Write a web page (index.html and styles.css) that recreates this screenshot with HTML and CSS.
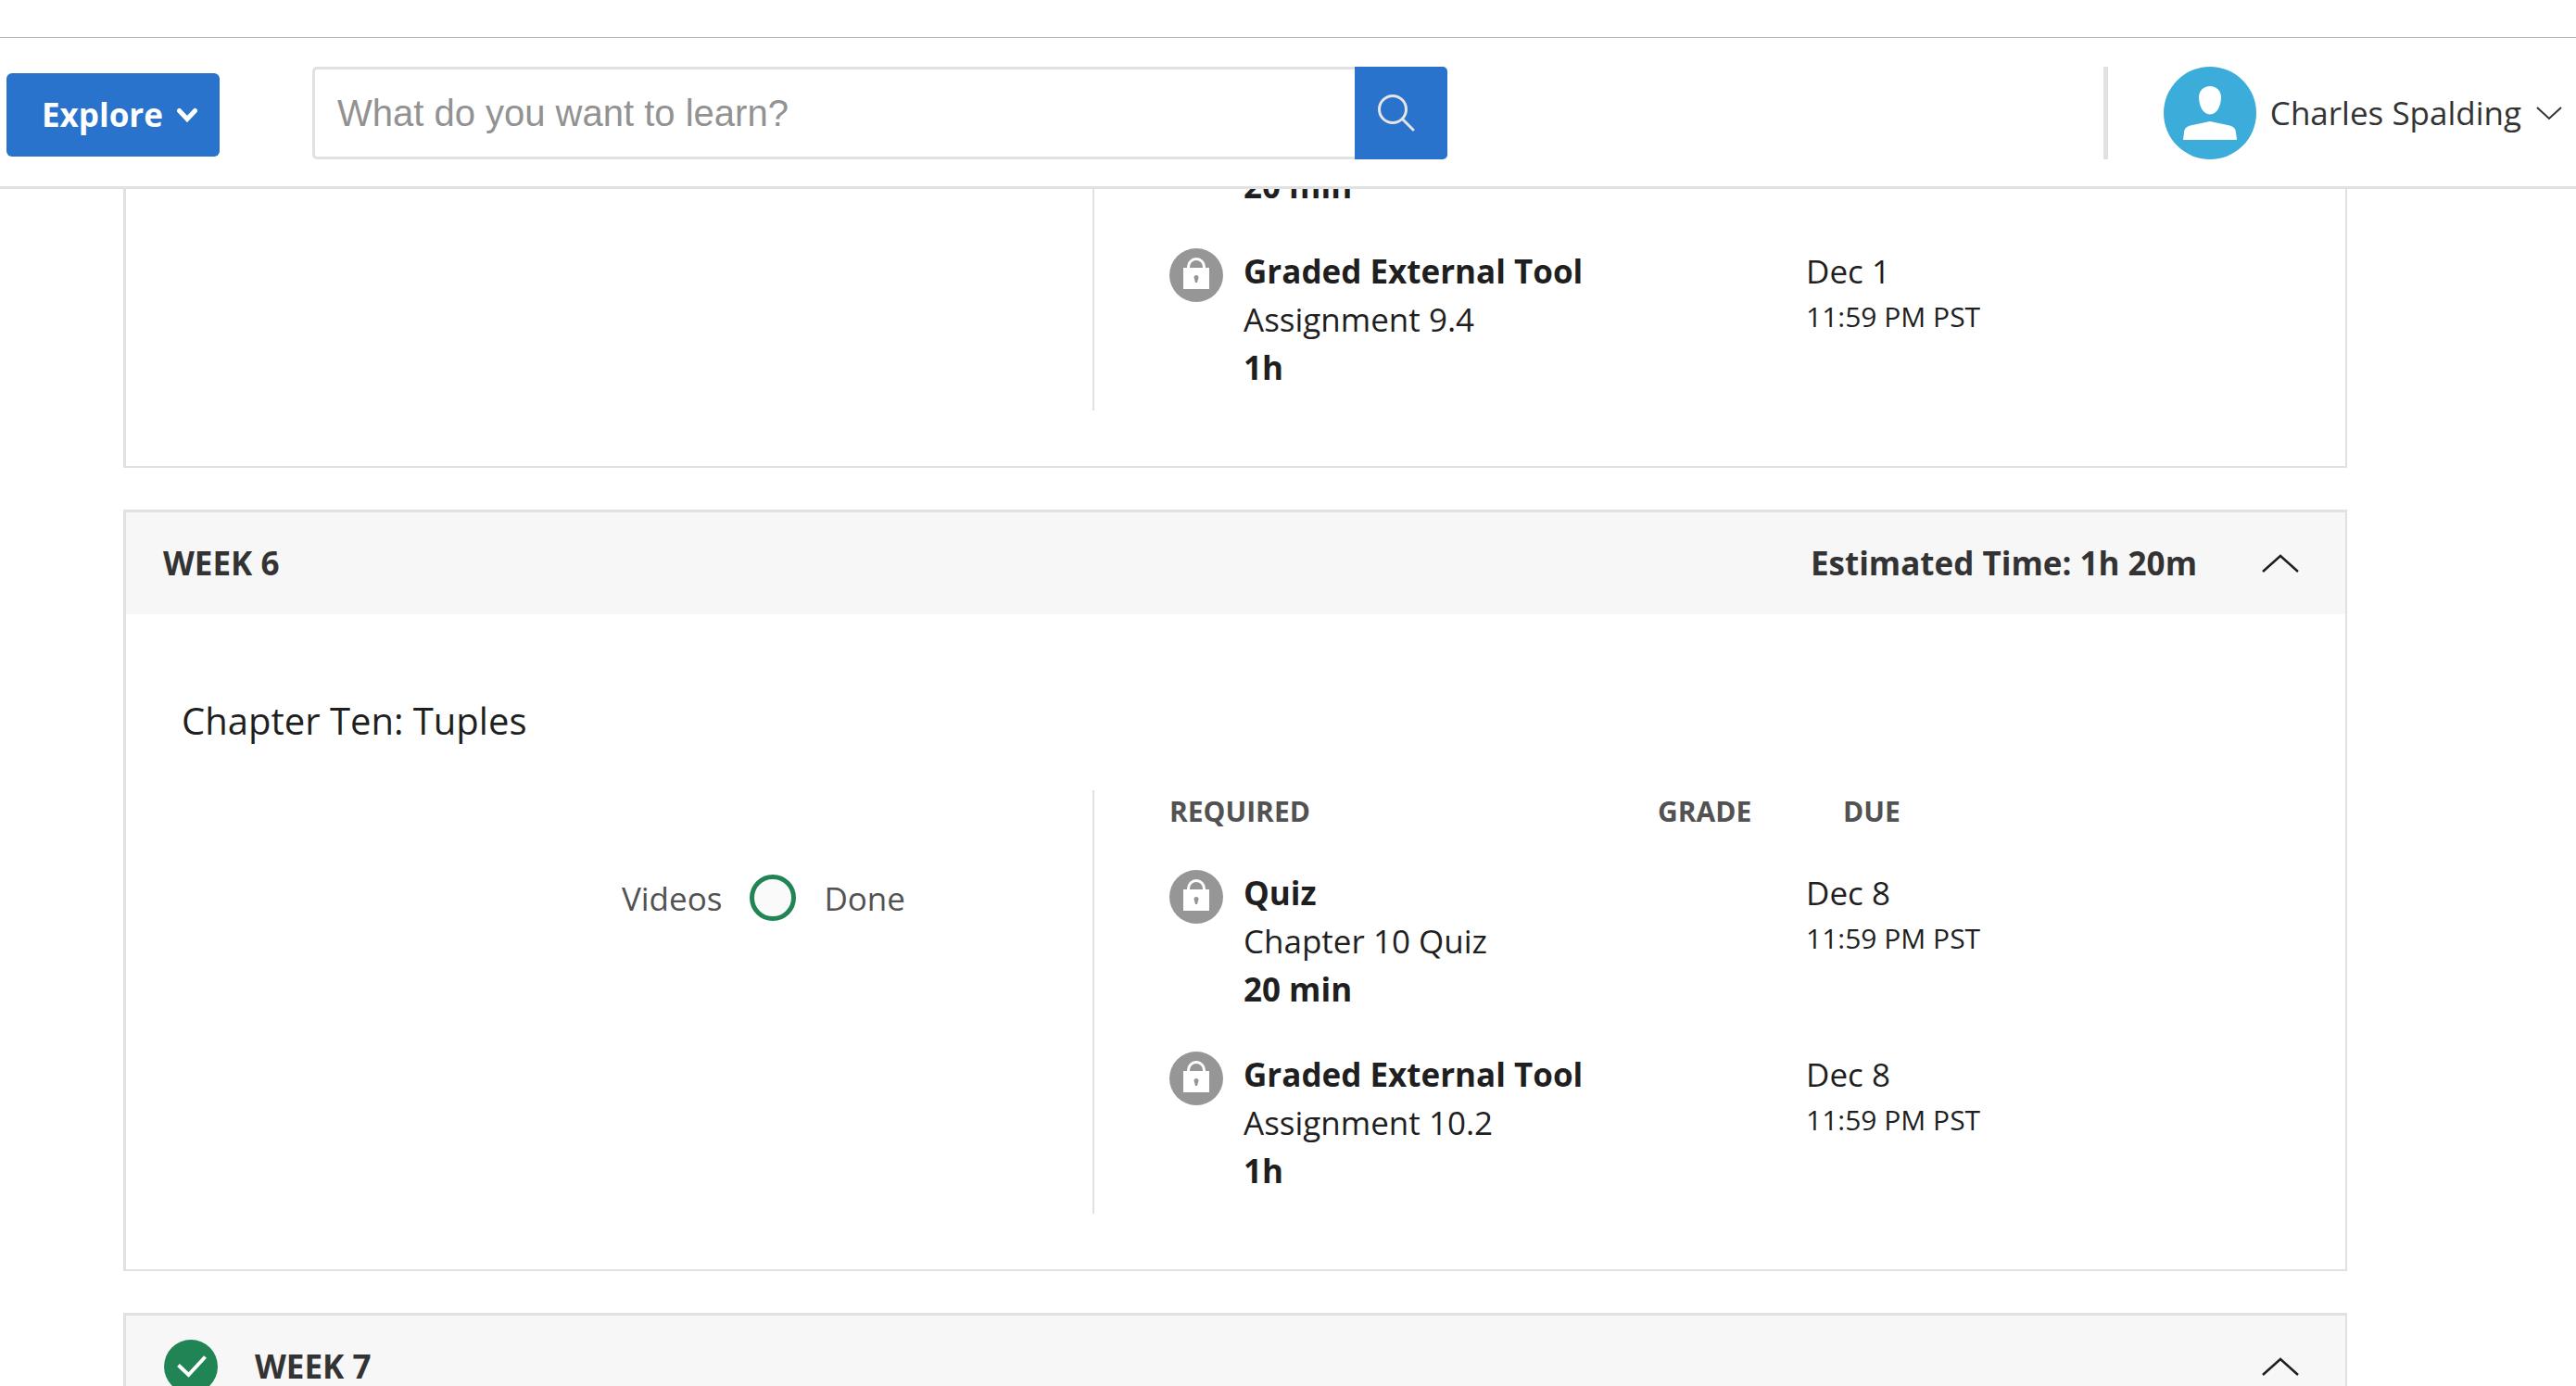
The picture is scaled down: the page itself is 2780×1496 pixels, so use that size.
FILE: index.html
```html
<!DOCTYPE html>
<html lang="en">
<head>
<meta charset="utf-8">
<title>Course Home</title>
<link rel="stylesheet" href="styles.css">
</head>
<body>
<svg class="sprite" aria-hidden="true">
  <symbol id="lock" viewBox="0 0 58 58">
    <circle cx="29" cy="29" r="29" fill="#969696"/>
    <path d="M20.500 22V20a8.500 8.500 0 0 1 17 0V22" fill="none" stroke="#fff" stroke-width="3"/>
    <path d="M15 21H43V44H15Z" fill="#fff"/>
    <path d="M29 29a2.500 2.500 0 0 0-2.500 2.500L28 37H30L31.500 31.500A2.500 2.500 0 0 0 29 29Z" fill="#969696"/>
  </symbol>
  <symbol id="chevron-up" viewBox="0 0 40 20">
    <path d="M1 19L20 2L39 19" fill="none" stroke="#1f1f1f" stroke-width="2.500"/>
  </symbol>
</svg>
<header class="site-header">
  <button class="explore" type="button">Explore
    <svg width="22" height="16" viewBox="0 0 22 16"><path d="M2.500 3.500L11 12.500L19.500 3.500" fill="none" stroke="#fff" stroke-width="5" stroke-linecap="round"/></svg>
  </button>
  <form class="search" role="search">
    <input class="search-input" type="text" placeholder="What do you want to learn?" aria-label="Search">
    <button class="search-button" type="button" aria-label="Search">
      <svg width="42" height="42" viewBox="0 0 42 42"><g fill="none" stroke="#e5e5e5" stroke-width="3" stroke-linecap="round"><circle cx="17" cy="17" r="14.500"/><path d="M27.500 27.500L39 39"/></g></svg>
    </button>
  </form>
  <button class="account" type="button">
    <svg class="avatar" width="100" height="100" viewBox="0 0 100 100">
      <circle cx="50" cy="50" r="50" fill="#3cadda"/>
      <path d="M50 21C43 21 38 26 38 33C38.500 43 42 51 50 51.500C58 51 61.500 43 62 33C62 26 57 21 50 21Z" fill="#fff"/>
      <path d="M50 59L69 63C76 64.500 77.500 66.500 78 71L79 79H21L22 71C22.500 66.500 24 64.500 31 63Z" fill="#fff"/>
    </svg>
    <span class="account-name">Charles Spalding</span>
    <svg width="28" height="15" viewBox="0 0 28 15"><path d="M1 1L14 13L27 1" fill="none" stroke="#333" stroke-width="2"/></svg>
  </button>
</header>

<main class="weeks">
  <section class="week week-scrolled">
    <div class="columns">
      <div class="progress"></div>
      <div class="required">
        <table class="items">
          <colgroup><col class="col-item"><col class="col-grade"><col></colgroup>
          <tbody>
            <tr>
              <td><div class="item item-plain"><strong>20 min</strong></div></td><td></td><td></td>
            </tr>
            <tr>
              <td><div class="item"><svg class="lock"><use href="#lock"/></svg><div><strong>Graded External Tool</strong><span>Assignment 9.4</span><strong>1h</strong></div></div></td>
              <td></td>
              <td>Dec 1<small>11:59 PM PST</small></td>
            </tr>
          </tbody>
        </table>
      </div>
    </div>
  </section>

  <section class="week">
    <header class="week-header">
      <h2>WEEK 6</h2>
      <p class="estimate">Estimated Time: 1h 20m</p>
      <button class="toggle" type="button" aria-label="Collapse week 6"><svg width="40" height="20"><use href="#chevron-up"/></svg></button>
    </header>
    <h3 class="chapter">Chapter Ten: Tuples</h3>
    <div class="columns">
      <div class="progress"><span>Videos</span><span class="ring"></span><span>Done</span></div>
      <div class="required">
        <table class="items">
          <colgroup><col class="col-item"><col class="col-grade"><col></colgroup>
          <thead><tr><th scope="col">REQUIRED</th><th scope="col">GRADE</th><th scope="col" class="due-head">DUE</th></tr></thead>
          <tbody>
            <tr>
              <td><div class="item"><svg class="lock"><use href="#lock"/></svg><div><strong>Quiz</strong><span>Chapter 10 Quiz</span><strong>20 min</strong></div></div></td>
              <td></td>
              <td>Dec 8<small>11:59 PM PST</small></td>
            </tr>
            <tr>
              <td><div class="item"><svg class="lock"><use href="#lock"/></svg><div><strong>Graded External Tool</strong><span>Assignment 10.2</span><strong>1h</strong></div></div></td>
              <td></td>
              <td>Dec 8<small>11:59 PM PST</small></td>
            </tr>
          </tbody>
        </table>
      </div>
    </div>
  </section>

  <section class="week">
    <header class="week-header">
      <svg class="done" width="58" height="58" viewBox="0 0 58 58"><circle cx="29" cy="29" r="29" fill="#208454"/><path d="M15.500 27.500L26.500 38L44.500 18.500" fill="none" stroke="#fff" stroke-width="4"/></svg>
      <h2>WEEK 7</h2>
      <button class="toggle" type="button" aria-label="Collapse week 7"><svg width="40" height="20"><use href="#chevron-up"/></svg></button>
    </header>
  </section>
</main>
</body>
</html>
```
FILE: styles.css
```css
* { box-sizing: border-box; }

body {
  display: flex;
  flex-direction: column;
  height: 100vh;
  margin: 0;
  padding-top: 40px;
  overflow: hidden;
  background: #fff;
  color: #1f1f1f;
  font: 400 35px/52px "Open Sans", "Liberation Sans", sans-serif;
}

h2, h3, p { margin: 0; }

svg { display: block; flex: none; }

button {
  margin: 0;
  padding: 0;
  border: 0;
  background: none;
  color: inherit;
  font: inherit;
}

.sprite { position: absolute; width: 0; height: 0; }

.site-header {
  display: flex;
  flex: none;
  align-items: center;
  padding: 31px 15px 29px 7px;
  border-top: 1px solid #b4b4b4;
  border-bottom: 3px solid #e1e1e1;
}

.explore {
  display: flex;
  align-items: center;
  gap: 15px;
  height: 90px;
  margin-top: 4px;
  padding: 0 24px 0 38px;
  border-radius: 6px;
  background: #2a73cc;
  color: #fff;
  font-weight: 700;
}

.search {
  display: flex;
  flex: 0 1 1225px;
  height: 100px;
  margin-left: 100px;
}

.search-input {
  flex: 1;
  min-width: 0;
  padding: 0 24px;
  border: 3px solid #e1e1e1;
  border-right: 0;
  border-radius: 5px 0 0 5px;
  background: #fff;
  font: 40px "Liberation Sans", Arial, sans-serif;
}

.search-input::placeholder { color: #929292; opacity: 1; }

.search-button {
  display: flex;
  align-items: center;
  justify-content: center;
  width: 100px;
  padding-right: 10px;
  border-radius: 0 5px 5px 0;
  background: #2a73cc;
}

.account {
  display: flex;
  align-items: center;
  margin-left: auto;
  padding-left: 60px;
  border-left: 5px solid #e1e1e1;
  color: #333;
}

.account-name { margin: 0 16px 0 15px; }

.weeks {
  display: flex;
  flex: 1;
  flex-direction: column;
  gap: 45px;
  min-height: 0;
  padding: 0 247px 0 133px;
  overflow: hidden;
}

.week {
  flex: none;
  border: solid #e1e1e1;
  border-width: 3px 2px 2px 3px;
}

/* The first week has scrolled partly under the site header. */
.week-scrolled { margin-top: -49px; border-top: 0; }

.week-header {
  display: flex;
  align-items: center;
  height: 110px;
  padding: 0 50px 0 40px;
  background: #f7f7f7;
  color: #333;
}

.week-header h2, .estimate { font-size: 35px; font-weight: 700; }

.done { margin: 0 40px 0 1px; }

.estimate { margin-left: auto; }

.toggle { margin-left: auto; }

.estimate + .toggle { margin-left: 70px; }

.chapter {
  padding: 85px 60px 45px;
  font-size: 40px;
  font-weight: 400;
  line-height: 60px;
}

.columns {
  display: grid;
  grid-template-columns: 1043fr 1352fr;
  padding-bottom: 60px;
}

.progress {
  display: flex;
  align-items: flex-start;
  justify-content: flex-end;
  gap: 30px;
  padding: 91px 202px 0 0;
  color: #525252;
}

.ring {
  width: 50px;
  height: 50px;
  border: 5px solid #208454;
  border-radius: 50%;
  background: #fafafa;
}

.required { padding-left: 81px; border-left: 2px solid #e1e1e1; }

.items {
  width: 100%;
  border-collapse: collapse;
  table-layout: fixed;
}

.col-item { width: 527px; }

.col-grade { width: 160px; }

.items th {
  padding: 0 0 20px;
  color: #525252;
  font-size: 30px;
  font-weight: 700;
  line-height: 45px;
  text-align: left;
}

.items .due-head { padding-left: 40px; }

.items td { padding: 20px 0; vertical-align: top; }

.items small {
  display: block;
  font-size: 30px;
  line-height: 45px;
}

.item { display: flex; gap: 22px; }

.item-plain { padding-left: 80px; }

.item strong, .item span { display: block; }

.lock { width: 58px; height: 58px; margin-top: 1px; }
```
